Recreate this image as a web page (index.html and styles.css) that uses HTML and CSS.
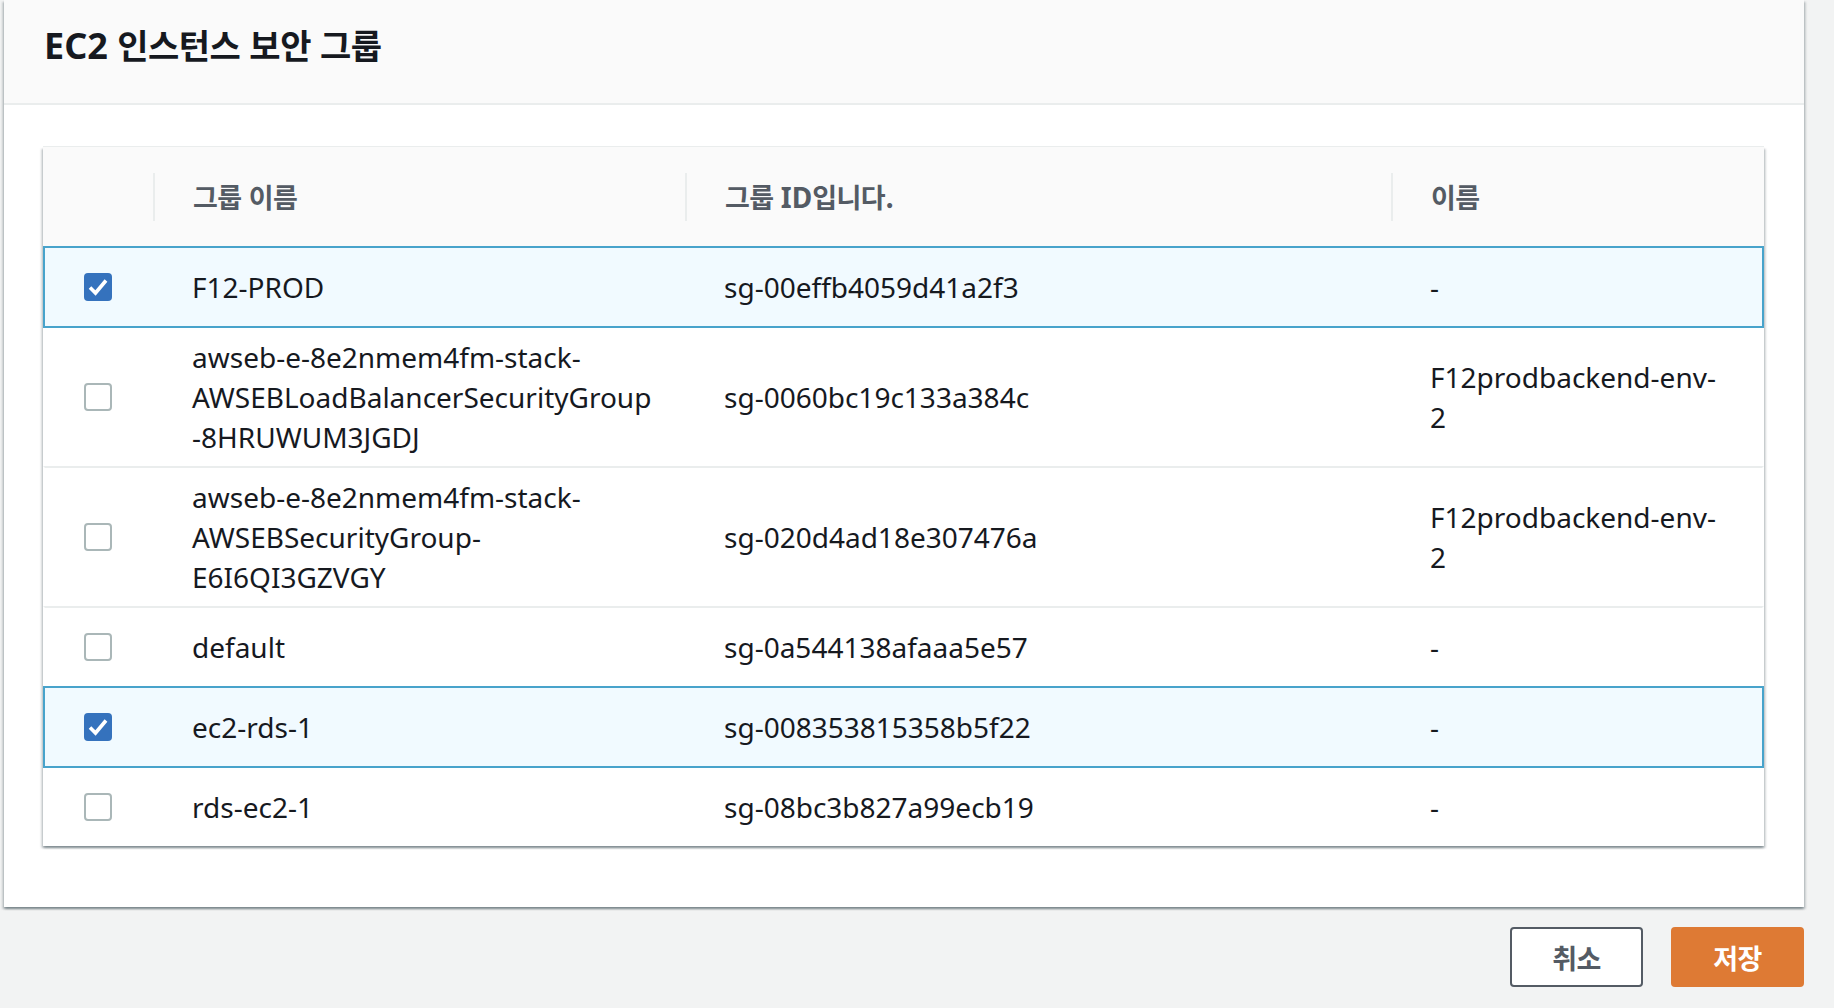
FILE: index.html
```html
<!DOCTYPE html>
<html lang="ko">
<head>
<meta charset="utf-8">
<title>EC2 인스턴스 보안 그룹</title>
<link rel="stylesheet" href="styles.css">
</head>
<body>
<div class="page">
  <section class="panel">
    <header class="panel-header">
      <h2 class="title">EC2 <span class="ko">인스턴스 보안 그룹</span></h2>
    </header>
    <div class="panel-body">
      <div class="table">
        <div class="thead">
          <div class="th"></div>
          <div class="th"><span class="divider"></span><span class="ko">그룹 이름</span></div>
          <div class="th"><span class="divider"></span><span><span class="ko">그룹 </span>ID<span class="ko">입니다.</span></span></div>
          <div class="th"><span class="divider"></span><span class="ko">이름</span></div>
        </div>

        <div class="row sel">
          <div class="td td-check"><span class="cb checked"><svg viewBox="0 0 28 28" width="28" height="28"><polyline points="6,14.5 11.5,20 22,7.5" fill="none" stroke="#fff" stroke-width="3.6"/></svg></span></div>
          <div class="td">F12-PROD</div>
          <div class="td">sg-00effb4059d41a2f3</div>
          <div class="td">-</div>
        </div>

        <div class="row">
          <div class="td td-check"><span class="cb"></span></div>
          <div class="td">awseb-e-8e2nmem4fm-stack-<br>AWSEBLoadBalancerSecurityGroup<br>-8HRUWUM3JGDJ</div>
          <div class="td">sg-0060bc19c133a384c</div>
          <div class="td">F12prodbackend-env-<br>2</div>
        </div>

        <div class="row">
          <div class="td td-check"><span class="cb"></span></div>
          <div class="td">awseb-e-8e2nmem4fm-stack-<br>AWSEBSecurityGroup-<br>E6I6QI3GZVGY</div>
          <div class="td">sg-020d4ad18e307476a</div>
          <div class="td">F12prodbackend-env-<br>2</div>
        </div>

        <div class="row">
          <div class="td td-check"><span class="cb"></span></div>
          <div class="td">default</div>
          <div class="td">sg-0a544138afaaa5e57</div>
          <div class="td">-</div>
        </div>

        <div class="row sel">
          <div class="td td-check"><span class="cb checked"><svg viewBox="0 0 28 28" width="28" height="28"><polyline points="6,14.5 11.5,20 22,7.5" fill="none" stroke="#fff" stroke-width="3.6"/></svg></span></div>
          <div class="td">ec2-rds-1</div>
          <div class="td">sg-008353815358b5f22</div>
          <div class="td">-</div>
        </div>

        <div class="row">
          <div class="td td-check"><span class="cb"></span></div>
          <div class="td">rds-ec2-1</div>
          <div class="td">sg-08bc3b827a99ecb19</div>
          <div class="td">-</div>
        </div>
      </div>
    </div>
  </section>
  <div class="actions">
    <button class="btn btn-normal" type="button"><span class="ko">취소</span></button>
    <button class="btn btn-primary" type="button"><span class="ko">저장</span></button>
  </div>
</div>
</body>
</html>
```

FILE: styles.css
```css
* { box-sizing: border-box; }

html, body {
  margin: 0;
  padding: 0;
}

body {
  background: #f2f3f3;
  font-family: "Noto Sans", "Noto Sans CJK KR", sans-serif;
  color: #16191f;
  font-size: 28px;
  line-height: 40px;
}

.ko {
  font-family: "Noto Sans CJK KR", "Noto Sans", sans-serif;
  font-size: 27px;
  letter-spacing: -0.5px;
}

.page {
  padding: 0 30px 0 4px;
  display: flex;
  flex-direction: column;
}

.panel {
  background: #ffffff;
  box-shadow: 0 2px 2px rgba(0, 28, 36, 0.3), 2px 2px 2px rgba(0, 28, 36, 0.15), -2px 2px 2px rgba(0, 28, 36, 0.15);
}

.panel-header {
  height: 105px;
  background: #fafafa;
  border-bottom: 2px solid #eaeded;
  display: flex;
  align-items: center;
  padding: 0 40px 12px 40px;
}

.title {
  margin: 0;
  font-size: 36px;
  font-weight: 700;
  line-height: 44px;
  color: #16191f;
}

.title .ko {
  font-size: 34px;
  letter-spacing: -0.5px;
}

.panel-body {
  padding: 42px 40px 61px 39px;
}

.table {
  background: #ffffff;
  box-shadow: 0 -1px 0 #eaeded, 0 2px 2px rgba(0, 28, 36, 0.3), 2px 2px 2px rgba(0, 28, 36, 0.15), -2px 2px 2px rgba(0, 28, 36, 0.15);
}

.thead,
.row {
  display: grid;
  grid-template-columns: 108px 532px 706px 1fr;
  border-left: 2px solid transparent;
  border-right: 2px solid transparent;
}

.thead {
  height: 99px;
  background: #fafafa;
}

.th {
  display: flex;
  align-items: center;
  color: #545b64;
  font-weight: 700;
}

.th .ko {
  font-size: 27px;
}

.divider {
  width: 2px;
  height: 48px;
  background: #eaeded;
  margin-right: 38px;
  flex: none;
}

.row {
  border-top: 2px solid #eaeded;
}

.row.sel {
  border: 2px solid #48a3cb;
  background: #f1faff;
}

.row.sel + .row {
  border-top: 0;
}

.td {
  display: flex;
  align-items: center;
  min-height: 78px;
  padding: 9px 0 9px 39px;
  white-space: nowrap;
}

.cb {
  width: 28px;
  height: 28px;
  border: 2px solid #aab7b8;
  border-radius: 4px;
  background: #ffffff;
  display: block;
  flex: none;
}

.cb.checked {
  border: 0;
  background: #3572bd;
}

.cb svg {
  display: block;
}

.actions {
  display: flex;
  justify-content: flex-end;
  gap: 28px;
  margin-top: 20px;
}

.btn {
  width: 133px;
  height: 60px;
  border-radius: 4px;
  font-family: "Noto Sans CJK KR", "Noto Sans", sans-serif;
  font-weight: 700;
  padding: 0;
  display: flex;
  align-items: center;
  justify-content: center;
  cursor: pointer;
}

.btn .ko {
  font-size: 27px;
  letter-spacing: -0.5px;
}

.btn-normal {
  background: #ffffff;
  border: 2px solid #545b64;
  color: #545b64;
}

.btn-primary {
  background: #de7a34;
  border: 0;
  color: #ffffff;
}
```
